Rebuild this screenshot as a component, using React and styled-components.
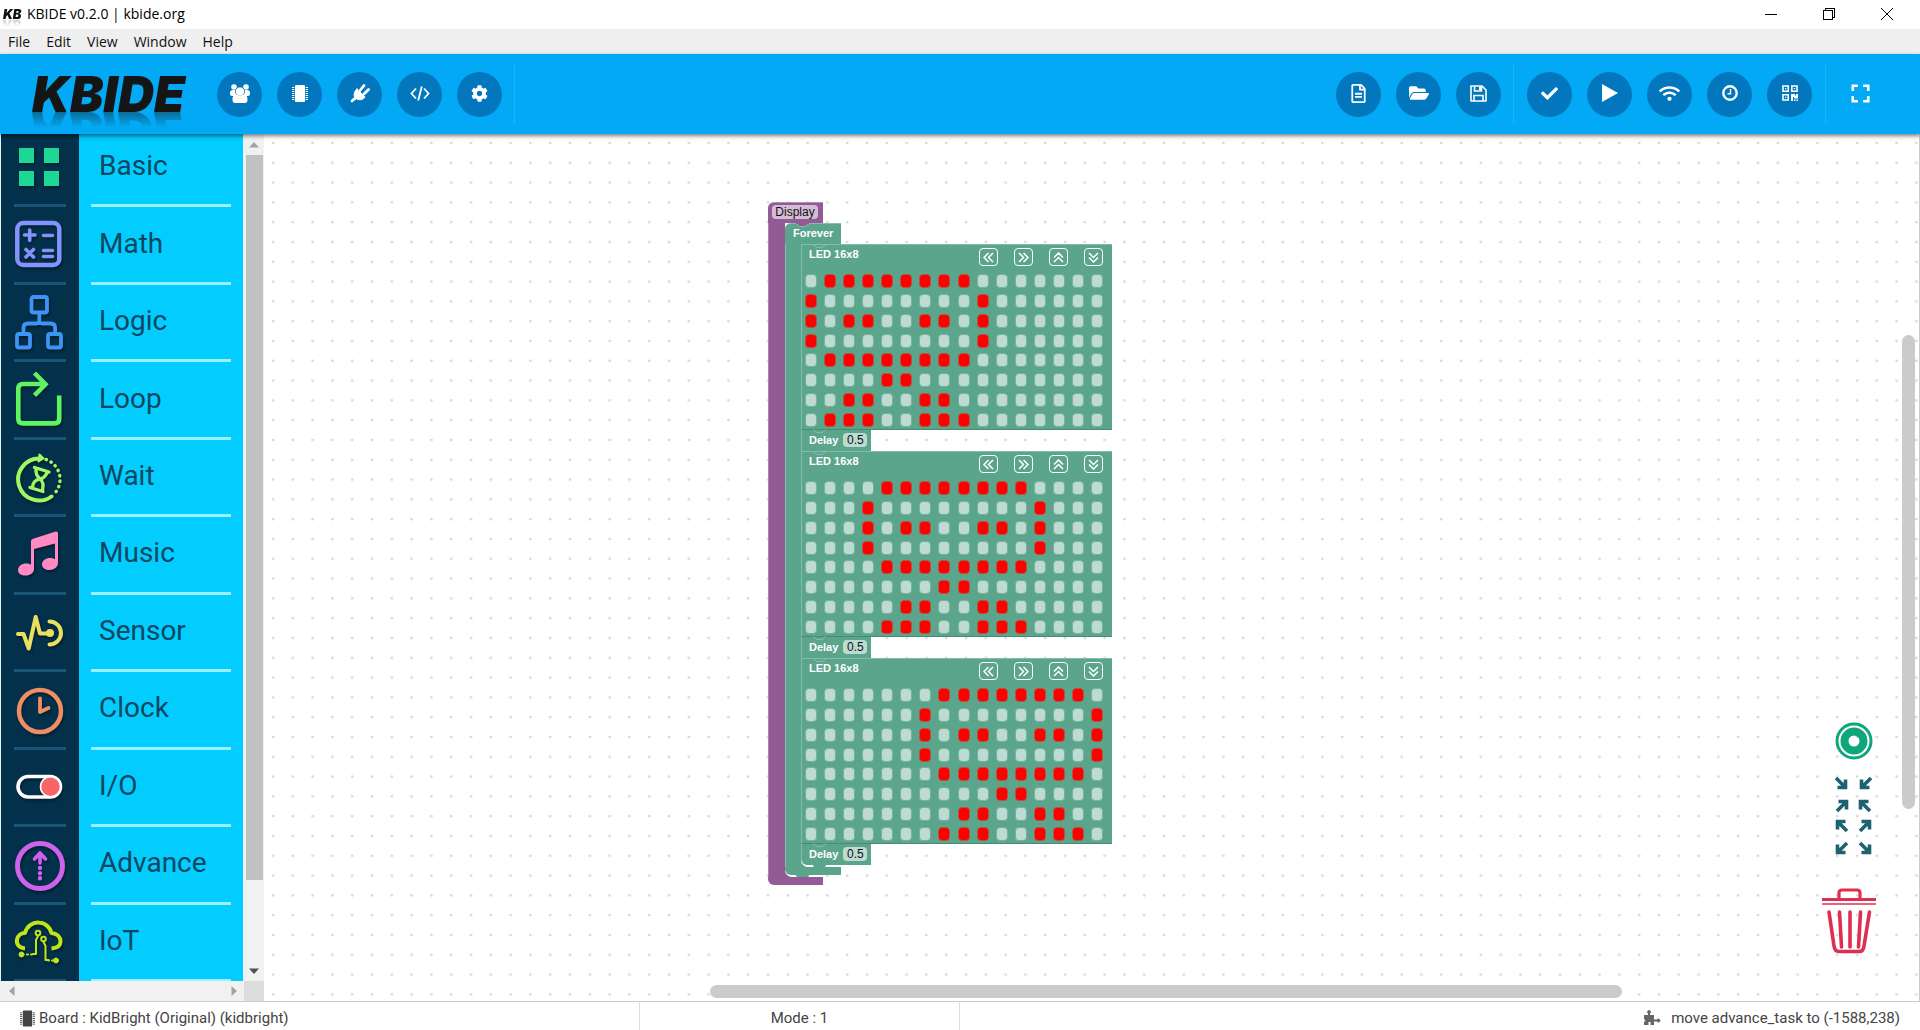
import React from 'react';
import styled, { createGlobalStyle, css } from 'styled-components';
import { FaFolderOpen, FaRegFileAlt, FaCheck, FaWifi, FaCog } from 'react-icons/fa';
import { MdFullscreen } from 'react-icons/md';

const GlobalStyle = createGlobalStyle`
  * { box-sizing: border-box; }
  body { margin: 0; background: #fff; font-family: Roboto, sans-serif; overflow: hidden; }
  button { font: inherit; border: 0; padding: 0; margin: 0; background: none; color: inherit; cursor: pointer; }
`;

const Page = styled.div`
  display: flex;
  flex-direction: column;
  height: 100vh;
`;

/* ---------- window frame ---------- */

const TitleBar = styled.header`
  display: flex;
  align-items: center;
  height: 29px;
  padding: 0 4px 1px 3px;
  font: 14px/20px "Open Sans", sans-serif;
  color: #000;
`;

const TinyMark = styled.span`
  width: 24px;
  font: italic 900 13px/16px Inter, sans-serif;
  color: #111;
  -webkit-box-reflect: below -5px linear-gradient(transparent 40%, rgba(0, 0, 0, 0.3));
`;

const WindowTitle = styled.h1`
  flex: 1;
  margin: 0;
  font: inherit;
`;

const WindowButton = styled.button`
  display: grid;
  place-items: center;
  width: 58px;
  height: 28px;
`;

const MenuBar = styled.nav`
  display: flex;
  height: 25px;
  background: #efefef;
  font: 14px/25px "Open Sans", sans-serif;
  color: #111;
`;

const MenuItem = styled.button`
  padding: 0 8px;
`;

/* ---------- toolbar ---------- */

const Toolbar = styled.div`
  position: relative;
  z-index: 2;
  display: flex;
  align-items: center;
  height: 80px;
  flex: none;
  padding: 0 37px 0 32px;
  background: #03a9f4;
  box-shadow: 0 2px 4px rgba(0, 0, 0, 0.5);
`;

const Logo = styled.div`
  width: 185px;
  font: italic 900 50px/50px Inter, "Liberation Sans", sans-serif;
  color: #151515;
  -webkit-box-reflect: below -14px linear-gradient(transparent 55%, rgba(0, 0, 0, 0.6));
`;

const Group = styled.div`
  display: flex;
  gap: 15px;
`;

const Divider = styled.div`
  width: 1px;
  height: 60px;
  margin: 0 ${p => p.$right}px 0 ${p => p.$left}px;
  background: #1cb3f7;
`;

const Spacer = styled.div`
  flex: 1;
`;

const RoundButton = styled.button`
  display: grid;
  place-items: center;
  width: 45px;
  height: 45px;
  padding-bottom: 2px;
  border-radius: 50%;
  background: ${p => (p.$plain ? 'transparent' : '#0277bd')};
  color: #fff;
`;

/* ---------- toolbox ---------- */

const Main = styled.main`
  display: flex;
  flex: 1;
  min-height: 0;
`;

const Toolbox = styled.aside`
  display: grid;
  grid-template-columns: 1fr 20px;
  grid-template-rows: 1fr 20px;
  flex: none;
  width: 264px;
  padding-left: 1px;
  background: #e4f4fa;
`;

const CategoryView = styled.div`
  display: flex;
  overflow: hidden;
  min-height: 0;
  margin-right: 1px;
  background: #03ccff;
`;

const CategoryList = styled.div`
  display: flex;
  flex-direction: column;
  flex: 1;
  margin: -4px 0 -1px;
`;

const Category = styled.button`
  display: flex;
  flex: 1;
  min-height: 0;
  text-align: left;
`;

const IconCell = styled.span`
  display: flex;
  flex-direction: column;
  align-items: center;
  justify-content: space-between;
  width: 78px;
  height: 100%;
  padding-top: 9px;
  background: #03304a;
  &::after {
    content: '';
    width: 52px;
    height: 3px;
    background: #1a5576;
  }
  svg { filter: drop-shadow(1px 2px 1px rgba(0, 0, 0, 0.35)); }
`;

const CategoryName = styled.span`
  flex: 1;
  display: flex;
  align-items: center;
  height: 100%;
  margin: 0 12px;
  padding: 0 8px 2px;
  border-bottom: 3px solid #9bf0ff;
  font-size: 28px;
  line-height: 36px;
  color: #0b4760;
`;

const scrollTrack = css`
  display: flex;
  align-items: center;
  background: #f1f1f1;
`;

const VScroll = styled.div`
  ${scrollTrack}
  flex-direction: column;
`;

const HScroll = styled.div`
  ${scrollTrack}
  justify-content: space-between;
`;

const ScrollArrow = styled.button`
  display: grid;
  place-items: center;
  flex: none;
  width: 21px;
  height: 21px;
`;

const ThumbLane = styled.div`
  flex: 1;
`;

const Thumb = styled.div`
  width: 17px;
  height: 90%;
  background: #c1c1c1;
`;

const Corner = styled.div`
  background: #dcdcdc;
`;

/* ---------- workspace ---------- */

const Workspace = styled.section`
  position: relative;
  flex: 1;
  overflow: hidden;
  border-right: 1px solid #ccc;
  background: #fff;
`;

const DotGrid = styled.svg`
  display: block;
  width: 100%;
  height: 100%;
`;

const Bar = styled.div`
  position: absolute;
  border-radius: 7px;
  background: #cbcbcb;
`;

const BottomBar = styled(Bar)`
  left: 446px;
  right: 297px;
  bottom: 3px;
  height: 13px;
`;

const SideBar = styled(Bar)`
  top: 201px;
  bottom: 192px;
  right: 4px;
  width: 13px;
`;

const Controls = styled.div`
  position: absolute;
  right: 43px;
  bottom: 47px;
  display: flex;
  flex-direction: column;
  align-items: flex-end;
`;

const ControlButton = styled.button`
  display: block;
  margin: 0 ${p => p.$right}px ${p => p.$below}px 0;
  svg { display: block; }
`;

const green = '#5ba58c';
const purple = '#935b96';

const BlockRoot = styled.div`
  position: absolute;
  left: 504px;
  top: 68px;
  font: bold 11px/14px "Liberation Sans", Arial, sans-serif;
  color: #fff;
`;

const Container = styled.div`
  display: grid;
  grid-template-columns: ${p => p.$arm}px auto;
  justify-items: start;
`;

const Head = styled.div`
  position: relative;
  grid-column: 1 / 3;
  width: ${p => p.$width}px;
  height: ${p => p.$height}px;
  padding: 2px ${p => p.$pad}px;
  border-top: 1px solid ${p => p.$edge};
  border-radius: 6px 0 0 0;
  background: ${p => p.$color};
`;

const Arm = styled.div`
  width: 100%;
  border-left: 1px solid ${p => p.$edge};
  background: ${p => p.$color};
`;

const Foot = styled.div`
  grid-column: 1 / 3;
  position: relative;
  width: ${p => p.$width}px;
  height: 8px;
  border-radius: 0 0 0 6px;
  background: ${p => p.$color};
`;

const Inner = styled.div`
  position: relative;
  padding-bottom: 2px;
`;

const Elbow = styled.div`
  position: absolute;
  left: 0;
  bottom: 0;
  width: ${p => p.$width}px;
  height: 8px;
  background: ${p => p.$color};
  &::after {
    content: '';
    position: absolute;
    inset: 0;
    border-radius: 0 0 0 7px;
    background: #fff;
  }
`;

const Stack = styled.div`
  position: relative;
  display: flex;
  flex-direction: column;
  align-items: flex-start;
`;

const LedBlock = styled.div`
  position: relative;
  width: 311px;
  height: 186px;
  padding: 3px 9px 0 3px;
  border: solid;
  border-width: 1px 0 1px 1px;
  border-color: #84bca9 #84bca9 #4b8973;
  background: ${green};
`;

const LedHead = styled.div`
  display: flex;
  justify-content: space-between;
  height: 26px;
  padding-left: 4px;
`;

const LedTitle = styled.span`
  line-height: 12px;
`;

const Shifts = styled.div`
  display: flex;
  gap: 16px;
`;

const Shift = styled.button`
  display: grid;
  place-items: center;
  width: 19px;
  height: 18px;
  border: 1px solid #fff;
  border-radius: 4px;
  svg { transform: rotate(${p => p.$turn}deg); }
`;

const Leds = styled.div`
  display: grid;
  grid-template-columns: repeat(16, 12px);
  grid-auto-rows: 14px;
  justify-content: space-between;
  align-content: space-between;
  height: 153px;
`;

const Led = styled.input`
  appearance: none;
  width: 12px;
  height: 14px;
  margin: 0;
  border: 1px solid #75b39f;
  border-radius: 4px;
  background: #bddbd1;
  &:checked { background: #fe0000; border-color: #b5553f; }
`;

const DelayBlock = styled.label`
  position: relative;
  display: flex;
  align-items: center;
  gap: 5px;
  width: 70px;
  height: 21px;
  padding: 0 0 2px 7px;
  border-left: 1px solid #84bca9;
  border-radius: ${p => (p.$last ? '0 0 0 6px' : '0')};
  background: ${green};
`;

const fieldText = css`
  height: 14px;
  border: 0;
  border-radius: 4px;
  font: 12px/14px "Liberation Sans", Arial, sans-serif;
  color: #111;
`;

const DelayField = styled.input`
  ${fieldText}
  width: 24px;
  padding: 0;
  text-align: center;
  background: #bddbd1;
`;

const NameField = styled.span`
  ${fieldText}
  display: block;
  width: 46px;
  text-align: center;
  background: #d4bdd5;
`;

const NotchMark = styled.svg`
  position: absolute;
  left: 11px;
  ${p => (p.$below ? 'top: 100%;' : 'top: -1px;')}
`;

/* ---------- status bar ---------- */

const StatusBar = styled.footer`
  display: grid;
  grid-template-columns: 2fr 1fr 3fr;
  flex: none;
  height: 29px;
  border-top: 1px solid #ccc;
  background: #fff;
  color: #444;
  font-size: 15px;
`;

const StatusCell = styled.div`
  display: flex;
  align-items: center;
  justify-content: ${p => p.$align};
  gap: ${p => p.$gap || 0}px;
  padding: 4px 20px 0;
  line-height: 24px;
  border-right: ${p => (p.$rule ? '1px solid #ddd' : '0')};
`;

/* ---------- drawings ---------- */

const Chip = ({ w = 16, h = 17 }) => (
  <svg width={w} height={h} viewBox="0 0 16 17" fill="currentColor">
    <rect x="3" y="0" width="10" height="17" rx="1" />
    {[2, 4, 6, 8, 10, 12, 14].map(y => (
      <path key={y} d={`M0 ${y}h2.4v1H0zM13.6 ${y}H16v1h-2.4z`} />
    ))}
  </svg>
);

const Users = () => (
  <svg width="20" height="19" viewBox="0 0 20 19" fill="#fff">
    <circle cx="4" cy="3" r="2.8" />
    <circle cx="16" cy="3" r="2.8" />
    <path d="M0 9c0-2 1-3 3-3h3v6H2c-1.500 0-2-1-2-3zM20 9c0-2-1-3-3-3h-3v6h4c1.500 0 2-1 2-3z" />
    <circle cx="10" cy="7.500" r="4.600" stroke="#0277bd" strokeWidth="0.800" />
    <path d="M2.500 16c0-3 .5-5.500 4-5.500 2 1.500 5 1.500 7 0 3.500 0 4 2.500 4 5.500 0 2-1 3-2.500 3H5c-1.500 0-2.500-1-2.500-3z" />
  </svg>
);

const Plug = () => (
  <svg width="20" height="20" viewBox="0 0 20 20" fill="none" stroke="#fff" strokeLinecap="round">
    <path d="M7 6l8 8c-2 3.500-7 3.500-9.500 1S4 8.500 7 6z" fill="#fff" strokeWidth="1" />
    <path d="M10 7.500l4-5M14 11l4.500-4.500" strokeWidth="2.800" />
    <path d="M6 14.500C5 16 3.500 16 2 18" strokeWidth="2.800" />
  </svg>
);

const CodeIcon = () => (
  <svg width="20" height="15" viewBox="0 0 20 15" fill="none" stroke="#fff" strokeWidth="1.800">
    <path d="M6 2.500L1.500 7.500 6 12.500M14 2.500l4.500 5-4.500 5M11.800 0.500L8.200 14.500" />
  </svg>
);

const SaveIcon = () => (
  <svg width="17" height="17" viewBox="0 0 17 17" fill="none" stroke="#fff" strokeWidth="1.600">
    <path d="M1 1h11l4 4v11H1z" strokeLinejoin="round" />
    <path d="M4 16v-5.500h9V16M4.500 1v5h7V1" />
    <path d="M9 2h2v3H9z" fill="#fff" stroke="none" />
  </svg>
);

const QrIcon = () => (
  <svg width="16" height="16" viewBox="0 0 16 16" fill="none" stroke="#fff" strokeWidth="1.600">
    <path d="M1 1h5.200v5.200H1zM9.800 1H15v5.200H9.800zM1 9.800h5.200V15H1z" />
    <path d="M3 3h1.300v1.300H3zM11.800 3h1.300v1.300h-1.300zM3 11.800h1.300v1.300H3zM9 9h4v1.500h1V9h2v4.500h-4V12h-1v4H9zM12 14.500h1.500V16H12zM14.500 14.500H16V16h-1.500z" fill="#fff" stroke="none" />
  </svg>
);

const PlayIcon = () => (
  <svg width="16" height="18" viewBox="0 0 16 18" fill="#fff"><path d="M0 0l16 9-16 9z" /></svg>
);

const ClockIcon = () => (
  <svg width="16" height="16" viewBox="0 0 16 16" fill="none" stroke="#fff">
    <circle cx="8" cy="8" r="6.700" strokeWidth="2.400" />
    <path d="M8.500 4v4.700H5.500" strokeWidth="1.400" />
  </svg>
);

const Triangle = ({ turn, color }) => (
  <svg width="10" height="6" viewBox="0 0 10 6" style={{ transform: `rotate(${turn}deg)` }}>
    <path d="M0 5.500L5 0l5 5.500z" fill={color} />
  </svg>
);

const Notch = ({ below, fill = 'none', stroke = '#84bca9' }) => (
  <NotchMark $below={below} width="13" height="5" viewBox="0 0 13 5">
    <path d="M0 0.500L4 3.500H9L13 0.500" fill={fill} stroke={stroke} strokeWidth="1" />
    {fill !== 'none' && <path d="M0 0h13v1H0z" fill={fill} />}
  </NotchMark>
);

const Art = ({ color, width = 4.5, children }) => (
  <svg width="56" height="58" viewBox="0 0 56 58" fill="none" stroke={color} strokeWidth={width} strokeLinejoin="round" strokeLinecap="round">
    {children}
  </svg>
);

const categories = [
  ['Basic', <Art color="none"><path fill="#1fd795" d="M7 9h15v15H7zM32 9h15v15H32zM7 32h15v15H7zM32 32h15v15H32z" /></Art>],
  ['Math', <Art color="#8492fb" width={3.6}>
    <rect x="5.300" y="7" width="42" height="42" rx="6" strokeWidth="4.500" />
    <path d="M12.500 19h10.500M17.700 14v10.500M31.500 19.500h9M14 33.500l7.500 7.500M21.500 33.500L14 41M31.500 34.500h9M31.500 40.500h9" />
  </Art>],
  ['Logic', <Art color="#3d94f7" width={3.8}>
    <rect x="19.500" y="3" width="15.500" height="15.500" rx="2" />
    <rect x="5" y="40" width="13" height="13.500" rx="2" />
    <rect x="36" y="40" width="13" height="13.500" rx="2" />
    <path d="M27.300 20v8M11.500 38v-4c0-3 1.500-4.500 4.500-4.500h8c2 0 3.300-1 3.300-2.500 0 1.500 1.300 2.500 3.300 2.500h8c3 0 4.500 1.500 4.500 4.500v4" />
  </Art>],
  ['Loop', <Art color="#5ef562" width={4.6}>
    <path strokeLinecap="butt" strokeLinejoin="miter" d="M33 13H11c-3 0-4.700 1.700-4.700 4.700v30c0 3 1.700 4.700 4.700 4.700h31.500c3 0 4.700-1.700 4.700-4.700V24.500M22.500 2l11 11.300-11 11" />
  </Art>],
  ['Wait', <Art color="#9ff763" width={4}>
    <path d="M27.500 9.500a21 21 0 1 0 12 38" />
    <path d="M34 10.500a21 21 0 0 1 7 35.500" strokeWidth="3.400" strokeDasharray="0.500 5" />
    <path d="M27.500 5.500l4 4-5 3z" fill="#9ff763" strokeWidth="2" />
    <path d="M22.500 18.500L37 23M18 38.500l13 4M24 19.500c-.5 6 1.500 8 4 10.500-5 1-7 3-7.500 8M35.500 23c-2.500 5-4 6-7.500 7 3.500 3 3.500 6 2.500 11" strokeWidth="3.400" />
  </Art>],
  ['Music', <Art color="none">
    <path fill="#ff8ac4" d="M19 15.500c0-1.500.8-2.300 2-2.700L43 5.800c2-.6 3 .2 3 2V37c0 4-4 7-8.500 7-4 0-7.500-2-7.500-5.500 0-4 4-6.500 8-6.500 2 0 3.500.4 5 1.200V17.500L22 23v20c0 4-4 6.500-8.500 6.500-4 0-7.500-1.700-7.500-5.300C6 40 10 37.500 14 37.500c2 0 3.700.4 5 1.100z" />
  </Art>],
  ['Sensor', <Art color="#eae060" width={4}>
    <path d="M6 30h5.500l5.200 14.500L23.700 13l4.300 16.500h9" />
    <circle cx="38" cy="29" r="4" fill="#eae060" stroke="none" />
    <path d="M37.500 17.500a11.500 11.500 0 0 1 0 23" />
  </Art>],
  ['Clock', <Art color="#ef8e64">
    <circle cx="28" cy="30" r="21" /><path d="M28 17.500V31l8.500-4" strokeWidth="3.800" />
  </Art>],
  ['I/O', <Art color="#fff" width={3.6}>
    <rect x="6" y="17.500" width="42.500" height="20.500" rx="10.200" />
    <circle cx="38.500" cy="27.700" r="10" fill="#f76666" strokeWidth="1.500" />
  </Art>],
  ['Advance', <Art color="#cf62ec" width={5}>
    <circle cx="28" cy="30" r="22.500" />
    <path d="M28 17.500V27M22.500 23l5.500-6 5.500 6" strokeWidth="3.600" />
    <path d="M28 32v12" strokeWidth="4.400" strokeDasharray="0.100 5" />
  </Art>],
  ['IoT', <Art color="#bfe41a" width={4}>
    <path strokeLinecap="butt" d="M13 34.500C7 34 4 30 5 25.500c.8-4 4-6.500 8-6.500C15 12 21 8 27 8.500c6 .3 11 4.500 12.500 10.500 5.500.5 9 4 9 8.500 0 4-3.500 6.500-9 7" />
    <g strokeWidth="2">
      <circle cx="26" cy="19" r="2.300" /><circle cx="31.500" cy="25" r="2.300" />
      <path d="M26 22l-2 4v14h-3M31.500 28l2 4v14h3" />
      <path d="M20 40.500h-7M36 46.500h7" strokeDasharray="1 3" />
      <circle cx="9.500" cy="40.500" r="2.500" fill="#bfe41a" strokeWidth="1" />
      <circle cx="44" cy="46.500" r="2.500" fill="#bfe41a" strokeWidth="1" />
    </g>
  </Art>],
];

const face = [
  '.########',
  '#........#',
  '#.##..##.#',
  '#........#',
  '.########',
  '....##',
  '..##..##',
  '.###..###',
];

const frames = [0, 3, 6].map(shift => face.map(row => ('.'.repeat(shift) + row).padEnd(16, '.')));

const shifts = [['left', 0], ['right', 180], ['up', 90], ['down', 270]];

const toolsLeft = [
  ['Users', <Users />], ['Board', <Chip />], ['Plugins', <Plug />],
  ['Source code', <CodeIcon />], ['Settings', <FaCog size={17} />],
];
const toolsFile = [
  ['New', <FaRegFileAlt size={19} />], ['Open', <FaFolderOpen size={20} />], ['Save', <SaveIcon />],
];
const toolsRun = [
  ['Compile', <FaCheck size={17} />], ['Run', <PlayIcon />], ['Wifi', <FaWifi size={21} />],
  ['Time', <ClockIcon />], ['QR code', <QrIcon />],
];

const Tools = ({ items }) => (
  <Group>
    {items.map(([name, icon]) => <RoundButton key={name} aria-label={name}>{icon}</RoundButton>)}
  </Group>
);

const LedMatrix = ({ rows, index }) => (
  <LedBlock>
    <Notch />
    <LedHead>
      <LedTitle>LED 16x8</LedTitle>
      <Shifts>
        {shifts.map(([name, turn]) => (
          <Shift key={name} $turn={turn} aria-label={`Shift ${name}`}>
            <svg width="11" height="11" viewBox="0 0 11 11" fill="none" stroke="#fff" strokeWidth="1.500">
              <path d="M5.500 1L1 5.500 5.500 10M10 1L5.500 5.500 10 10" />
            </svg>
          </Shift>
        ))}
      </Shifts>
    </LedHead>
    <Leds>
      {rows.map((row, y) => [...row].map((dot, x) => (
        <Led key={`${x}-${y}`} type="checkbox" defaultChecked={dot === '#'} aria-label={`Frame ${index + 1} row ${y + 1} column ${x + 1}`} />
      )))}
    </Leds>
  </LedBlock>
);

const Blocks = () => (
  <BlockRoot>
    <Container $arm={17}>
      <Head $width={55} $height={21} $pad={4} $color={purple} $edge="#b38cb5"><NameField>Display</NameField></Head>
      <Arm $color={purple} $edge="#ad82af" />
      <Inner>
        <Elbow $width={38} $color={purple} />
        <Container $arm={16}>
          <Head $width={56} $height={21} $pad={8} $color={green} $edge="#84bca9">
            <Notch fill={purple} />
            Forever
          </Head>
          <Arm $color={green} $edge="#84bca9" />
          <Inner>
            <Elbow $width={40} $color={green} />
            <Stack>
              {frames.map((rows, i) => (
                <React.Fragment key={i}>
                  <LedMatrix rows={rows} index={i} />
                  <DelayBlock $last={i === 2}>
                    <Notch />
                    Delay
                    <DelayField defaultValue="0.5" />
                    {i === 2 && <Notch below fill={green} stroke={green} />}
                  </DelayBlock>
                </React.Fragment>
              ))}
            </Stack>
          </Inner>
          <Foot $width={56} $color={green}><Notch below fill={green} stroke={green} /></Foot>
        </Container>
      </Inner>
      <Foot $width={55} $color={purple} />
    </Container>
  </BlockRoot>
);

const arrowPath = 'M1 1l9 9M10.500 2.500v8h-8';
const FitArrows = () => (
  <svg width="38" height="78" viewBox="0 0 38 78" fill="none" stroke="#1d6272" strokeWidth="3.600">
    <path d={arrowPath} />
    <path d={arrowPath} transform="translate(37 0) scale(-1 1)" />
    <path d={arrowPath} transform="translate(1 35) scale(1 -1)" />
    <path d={arrowPath} transform="translate(36 35) scale(-1 -1)" />
    <path d={arrowPath} transform="translate(13 55) scale(-1 -1)" />
    <path d={arrowPath} transform="translate(24 55) scale(1 -1)" />
    <path d={arrowPath} transform="translate(13 65) scale(-1 1)" />
    <path d={arrowPath} transform="translate(24 65)" />
  </svg>
);

export default function App() {
  return (
    <Page>
      <GlobalStyle />
      <TitleBar>
        <TinyMark>KB</TinyMark>
        <WindowTitle>KBIDE v0.2.0 | kbide.org</WindowTitle>
        <WindowButton aria-label="Minimize">
          <svg width="12" height="12" shapeRendering="crispEdges"><path d="M0 6h12v1H0z" /></svg>
        </WindowButton>
        <WindowButton aria-label="Restore">
          <svg width="12" height="12" fill="none" stroke="#000" shapeRendering="crispEdges"><path d="M.5 2.500h9v9h-9zM2.500 2.500v-2h9v9h-2" /></svg>
        </WindowButton>
        <WindowButton aria-label="Close">
          <svg width="12" height="12" stroke="#000"><path d="M0 0l12 12M12 0L0 12" /></svg>
        </WindowButton>
      </TitleBar>
      <MenuBar>
        {['File', 'Edit', 'View', 'Window', 'Help'].map(m => <MenuItem key={m}>{m}</MenuItem>)}
      </MenuBar>
      <Toolbar>
        <Logo>KBIDE</Logo>
        <Tools items={toolsLeft} />
        <Divider $left={12} $right={0} />
        <Spacer />
        <Tools items={toolsFile} />
        <Divider $left={12} $right={13} />
        <Tools items={toolsRun} />
        <Divider $left={13} $right={12} />
        <RoundButton $plain aria-label="Full screen"><MdFullscreen size={31} /></RoundButton>
      </Toolbar>
      <Main>
        <Toolbox>
          <CategoryView>
            <CategoryList>
              {categories.map(([name, art]) => (
                <Category key={name}>
                  <IconCell>{art}</IconCell>
                  <CategoryName>{name}</CategoryName>
                </Category>
              ))}
            </CategoryList>
          </CategoryView>
          <VScroll>
            <ScrollArrow aria-label="Scroll up"><Triangle turn={0} color="#a3a3a3" /></ScrollArrow>
            <ThumbLane><Thumb /></ThumbLane>
            <ScrollArrow aria-label="Scroll down"><Triangle turn={180} color="#505050" /></ScrollArrow>
          </VScroll>
          <HScroll>
            <ScrollArrow aria-label="Scroll left"><Triangle turn={-90} color="#a3a3a3" /></ScrollArrow>
            <ScrollArrow aria-label="Scroll right"><Triangle turn={90} color="#a3a3a3" /></ScrollArrow>
          </HScroll>
          <Corner />
        </Toolbox>
        <Workspace>
          <DotGrid aria-hidden="true">
            <defs>
              <pattern id="dots" width="22" height="22" patternUnits="userSpaceOnUse" patternTransform="scale(0.9)">
                <circle cx="10" cy="10" r="1.600" fill="#d8d8d8" />
              </pattern>
            </defs>
            <rect width="100%" height="100%" fill="url(#dots)" />
          </DotGrid>
          <Blocks />
          <BottomBar />
          <SideBar />
          <Controls>
            <ControlButton aria-label="Center" $right={3} $below={17}>
              <svg width="38" height="38" viewBox="0 0 38 38" fill="none" stroke="#0ea67b">
                <circle cx="19" cy="19" r="17" strokeWidth="3" />
                <circle cx="19" cy="19" r="9.500" strokeWidth="8" />
              </svg>
            </ControlButton>
            <ControlButton aria-label="Fit blocks" $right={3} $below={33}><FitArrows /></ControlButton>
            <ControlButton aria-label="Delete" $right={0} $below={0}>
              <svg width="54" height="66" viewBox="0 0 54 66" fill="none" stroke="#df2f50" strokeLinecap="round">
                <path d="M0 11.500h54" strokeWidth="3" strokeLinecap="butt" />
                <path d="M0 16h54" strokeWidth="1.500" strokeLinecap="butt" />
                <path d="M17 10V5c0-2 1-3 3-3h15c2 0 3 1 3 3v5" strokeWidth="3.200" />
                <path d="M7 24l5 34c.6 4 2 5.500 5 5.500h20c3 0 4.500-1.500 5-5.500l5.500-34" strokeWidth="3.600" />
                <path d="M17.500 24l2 35M28 24v35M38.500 24l-2 35" strokeWidth="3.600" />
              </svg>
            </ControlButton>
          </Controls>
        </Workspace>
      </Main>
      <StatusBar>
        <StatusCell $align="flex-start" $gap={4} $rule><Chip w={15} h={17} />Board : KidBright (Original) (kidbright)</StatusCell>
        <StatusCell $align="center" $rule>Mode : 1</StatusCell>
        <StatusCell $align="flex-end" $gap={10}>
          <svg width="18" height="16" viewBox="0 0 18 16" fill="#666">
            <path d="M1 5h4V3.500a1.800 1.800 0 1 1 2 0V5h4v4.500h3a1.800 1.800 0 1 1 0 2h-3V15H7.500v-3h-2v3H1v-3l1.500-1.500L1 9z" />
          </svg>
          move advance_task to (-1588,238)
        </StatusCell>
      </StatusBar>
    </Page>
  );
}
